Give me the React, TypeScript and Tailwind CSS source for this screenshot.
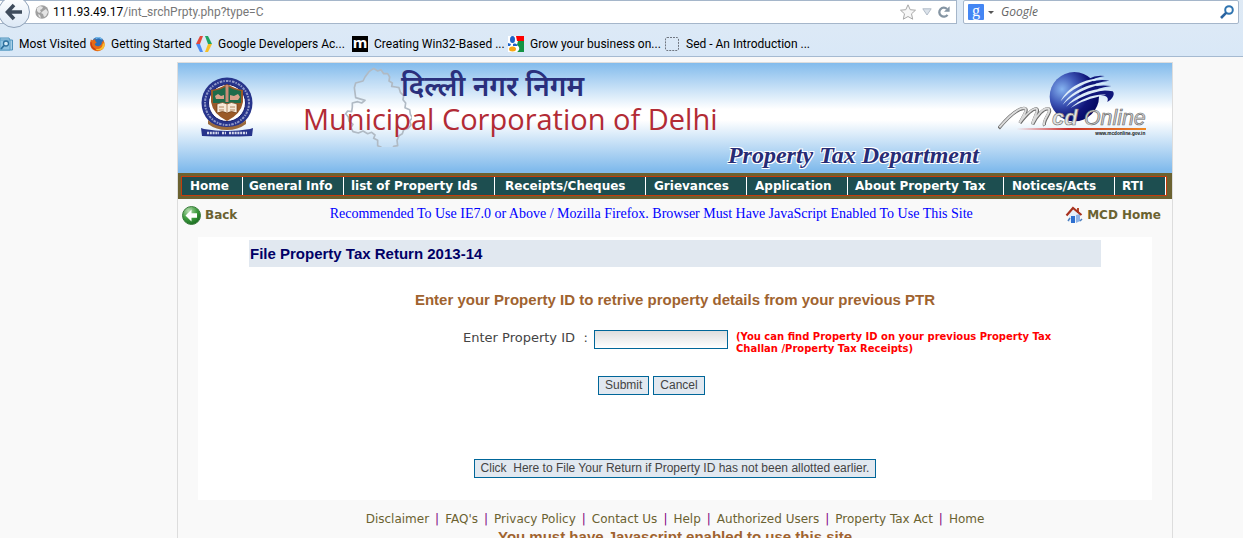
import { useState } from 'react';
import clsx from 'clsx';

const bookmarks = [
  { label: 'Most Visited', icon: <MostVisitedIcon />, width: 'w-[90px]' },
  { label: 'Getting Started', icon: <FirefoxIcon />, width: 'w-[106px]' },
  { label: 'Google Developers Ac...', icon: <DevelopersIcon />, width: 'w-[156px]' },
  { label: 'Creating Win32-Based ...', icon: <MIcon />, width: 'w-[156px]' },
  { label: 'Grow your business on...', icon: <GoogleIcon />, width: 'w-[156px]' },
  { label: 'Sed - An Introduction ...', icon: <BlankIcon />, width: 'w-[156px]' },
];

const menu = [
  { label: 'Home', className: 'w-[61px] pl-2' },
  { label: 'General Info', className: 'w-[101px] pl-1.5' },
  { label: 'list of Property Ids', className: 'w-[151px] pl-[7px]' },
  { label: 'Receipts/Cheques', className: 'w-[151px] pl-2.5' },
  { label: 'Grievances', className: 'w-[101px] pl-2' },
  { label: 'Application', className: 'w-[101px] pl-2' },
  { label: 'About Property Tax', className: 'w-[156px] pl-[7px]' },
  { label: 'Notices/Acts', className: 'w-[111px] pl-2' },
  { label: 'RTI', className: 'w-[51px] pl-[7px]' },
];

const footerLinks = [
  'Disclaimer',
  "FAQ's",
  'Privacy Policy',
  'Contact Us',
  'Help',
  'Authorized Users',
  'Property Tax Act',
  'Home',
];

function MostVisitedIcon() {
  return (
    <svg width="13" height="16" viewBox="0 0 13 16" className="shrink-0">
      <path d="M0 2h9l1 2h2.500v10H0z" fill="#a9d0e8" stroke="#4f93bd" />
      <path d="M0 4h10v10H0z" fill="#8fc3e2" stroke="#5b9dc6" />
      <circle cx="6" cy="7.500" r="2.500" fill="#d5ecf8" stroke="#2c6f9c" strokeWidth="1.300" />
      <path d="M4 9.500L1 13" stroke="#2c6f9c" strokeWidth="1.800" />
    </svg>
  );
}

function FirefoxIcon() {
  return (
    <svg width="15" height="16" viewBox="0 0 16 16" className="shrink-0">
      <circle cx="8.500" cy="7" r="6.500" fill="#2a6fb8" />
      <path d="M6 2c2-1 5-.8 6.500 1" stroke="#7cc1ef" strokeWidth="1.500" fill="none" />
      <path d="M1 3c.5 1 1 1.200 2 1C4 3 5 3 6 3.500 5 4.500 5.500 5.500 7 6c0 1-1.500 1-2 2 .5 2 3 3 5 2 2.500-1 3-3 2.500-5 .5 0 1 .5 1.500 1 0-1 0-2-.5-3C16 6 16.500 10 14 13c-3 3.500-9 3.500-12 0C-.5 10 0 6 1 3z" fill="#e66a14" />
      <path d="M13.500 8c0 4-4 6.500-8 5 3 3 8 2 9.500-1.500.7-2 .7-4 0-6 0 1-.5 2-1.500 2.500z" fill="#fbc02d" />
      <path d="M1 6c0 4 1.500 6.500 5 8" stroke="#c53a12" strokeWidth="1.500" fill="none" />
    </svg>
  );
}

function DevelopersIcon() {
  return (
    <svg width="16" height="16" viewBox="0 0 16 16" className="shrink-0">
      <path d="M4 0h3L4 8H0z" fill="#e2483b" />
      <path d="M0 8h4l3 8H4z" fill="#4b8bf4" />
      <path d="M9 0h3l4 8h-4z" fill="#1fa463" />
      <path d="M12 8h4l-4 8H9z" fill="#f6bf26" />
    </svg>
  );
}

function MIcon() {
  return (
    <span className="flex h-4 w-4 shrink-0 items-center justify-center bg-black pb-[3px] font-['Noto_Sans',sans-serif] text-[15px] leading-none font-bold text-white">
      m
    </span>
  );
}

function GoogleIcon() {
  return (
    <svg width="16" height="16" viewBox="0 0 16 16" className="shrink-0">
      <path d="M0 0h16v16H0z" fill="#fff" />
      <path d="M8 0h8v5H9z" fill="#f00" />
      <path d="M10 5h6v11H9c3-2 3-5 0-7z" fill="#149345" />
      <ellipse cx="4.500" cy="3.500" rx="2.500" ry="3.500" fill="#1d62c7" />
      <path d="M5 8c3-1 4 0 4.500 2H5zM0 7l3 1-1 2H0z" fill="#1d62c7" />
      <ellipse cx="4.500" cy="13" rx="3.500" ry="2.500" fill="#f7a813" />
    </svg>
  );
}

function BlankIcon() {
  return (
    <svg width="16" height="16" viewBox="0 0 16 16" className="shrink-0">
      <rect x="1.500" y="1.500" width="13" height="13" rx="1.500" fill="none" stroke="#707781" strokeDasharray="2 1" />
    </svg>
  );
}

function Browser() {
  return (
    <div className="h-[57px] border-b border-[#a5bad1] bg-linear-to-b from-[#dfeaf5] to-[#d9e8f7] font-[Roboto,'Open_Sans',sans-serif] text-[12px] text-black">
      <div className="flex h-6 gap-1.5 pr-1">
        <div className="relative flex flex-1 items-center border border-l-0 border-[#a5b6ca] bg-white pr-1.5 pl-[35px]">
          <button aria-label="Back" className="absolute -top-[5px] -left-[2px] flex h-8 w-8 items-center justify-center rounded-full border border-[#8fa1b8] bg-linear-to-b from-white to-[#dce8f5]">
            <svg width="18" height="18" viewBox="0 0 18 18">
              <path d="M9 2L2.500 9 9 16M3 9h14" fill="none" stroke="#3f4c5c" strokeWidth="3.600" />
            </svg>
          </button>
          <svg width="14" height="14" viewBox="0 0 14 14" className="mr-1 shrink-0">
            <circle cx="7" cy="7" r="6.700" fill="#a0a0a0" />
            <path d="M2 3l3-2 3 1-1 2-2 1 1 2-2 1-2-2zM8 6l3-2 2 3-2 4-2 1-1-3-2-1zM3 9l2 1 1 3-2-1z" fill="#e4e4e4" />
          </svg>
          <div role="textbox" aria-label="Address" contentEditable suppressContentEditableWarning className="flex-1 whitespace-nowrap text-[#777] outline-none">
            <span className="text-black">111.93.49.17</span>/int_srchPrpty.php?type=C
          </div>
          <svg width="16" height="16" viewBox="0 0 16 16">
            <path d="M8 .8l2.200 4.900 5.300.5-4 3.600 1.200 5.400L8 12.500l-4.700 2.700 1.200-5.400-4-3.600 5.300-.5z" fill="#f7f7f7" stroke="#a8a8a8" />
          </svg>
          <svg width="10" height="8" viewBox="0 0 10 8" className="ml-1.5">
            <path d="M.8.8h8.400L5 7z" fill="#dbe2ea" stroke="#b2bcc8" />
          </svg>
          <svg width="12" height="12" viewBox="0 0 12 12" className="ml-1.5">
            <path d="M9.500 8.800A4.500 4.500 0 1 1 9 3" fill="none" stroke="#8595a3" strokeWidth="2.300" />
            <path d="M6 5.800h5.600V.2z" fill="#8595a3" />
          </svg>
        </div>
        <div className="flex w-[276px] items-center rounded-[2px] border border-[#a5b6ca] bg-white pr-1 pl-1">
          <span className="flex h-4 w-4 items-center justify-center rounded-[1px] bg-[#4486f4] pb-[3px] font-['Liberation_Serif',serif] text-[16px] leading-none text-white">g</span>
          <svg width="6" height="3" viewBox="0 0 6 3" className="mr-[3px] ml-1">
            <path d="M0 0h6L3 3z" fill="#555" />
          </svg>
          <input aria-label="Search" placeholder="Google" className="min-w-0 flex-1 pl-1 font-['Open_Sans',sans-serif] italic outline-none placeholder:text-[#666]" />
          <svg width="14" height="14" viewBox="0 0 14 14">
            <circle cx="9" cy="5" r="3.800" fill="none" stroke="#2f74b0" strokeWidth="2" />
            <path d="M6.300 7.700L1 13" stroke="#2a63a0" strokeWidth="2.600" />
          </svg>
        </div>
      </div>
      <div className="flex h-8 items-center pt-2">
        {bookmarks.map((b) => (
          <a key={b.label} href="#" className={clsx('flex items-center gap-1.5 whitespace-nowrap', b.width)}>
            {b.icon}
            {b.label}
          </a>
        ))}
      </div>
    </div>
  );
}

function Emblem() {
  return (
    <svg width="54" height="61" viewBox="0 0 54 61" className="mt-[13px] shrink-0">
      <circle cx="27" cy="27" r="25.500" fill="#27348b" />
      <circle cx="27" cy="27" r="22" fill="none" stroke="#8f98c8" strokeWidth="2" strokeDasharray="1.500 1.200 2.500 1" />
      <circle cx="27" cy="27" r="18.500" fill="#fff" stroke="#1a2270" />
      <path d="M11 14q8-1 16-6 8 5 16 6v12q-2 12-16 19Q13 38 11 26z" fill="#9a5a28" />
      <path d="M13 15q8-1 14-5 6 4 14 5v12H13z" fill="#1e6b4b" />
      <path d="M25.500 9h3v17h-3z" fill="#c98d77" />
      <path d="M15 20l3-2 3 2 3-1v4h-8zM30 19l4 1 4-2 2 3-2 3h-8z" fill="#d9a28a" />
      <path d="M17 28q6-3 10 0 4-3 10 0v9q-6-3-10 0-4-3-10 0z" fill="#f6ead9" stroke="#6f3d18" strokeWidth=".7" />
      <path d="M27 28v9M19 31h5M30 31h5M19 34h5M30 34h5" stroke="#b58862" />
      <path d="M8 44q7 7 19 7t19-7v4q-8 6-19 6T8 48z" fill="#9a6a3c" />
      <path d="M1 52l3 1q23 4 46 0l3-1-1 8q-25 1-50 0z" fill="#27348b" />
      <path d="M7 57h12M22 57h4M29 57h18" stroke="#d5d8ea" strokeWidth="2.500" strokeDasharray="2 .8" />
    </svg>
  );
}

function DelhiMap() {
  return (
    <svg width="71" height="80" viewBox="516 33 213 240" className="absolute top-1 left-[38px]">
      <path
        d="M560 125l-4-30 4-14 22-6 6-12 12-16 14-10 12 8 10-4 8 12 12 0 6 10-2 12 10 6-2 10 12 2 10 2 4 14 10 10-2 12 8 10-2 14 14 6 2 14 6 10-8 10 4 12-8 10-14 4-4 12-10 6-6 14 2 16-12 2-4 12-14 6-14 0-6-16-10-4 0-16-12-6 4-10-10-8-12 4-14-8-14 6-16-4-6-12 6-10-12-10-2-12-8-10 6-8 12 2 2-14 0-12 16-4 12 4 10-8z"
        fill="#fff"
        fillOpacity=".15"
        stroke="#b0bac4"
        strokeWidth="5"
        strokeLinejoin="round"
      />
    </svg>
  );
}

function McdOnlineLogo() {
  return (
    <svg width="150" height="66" viewBox="18 15 450 198" className="mt-2 shrink-0">
      <defs>
        <radialGradient id="globe" cx=".25" cy=".35" r=".75">
          <stop offset="0" stopColor="#86b4f0" />
          <stop offset=".4" stopColor="#3f58b8" />
          <stop offset=".75" stopColor="#10157a" />
          <stop offset="1" stopColor="#060a66" />
        </radialGradient>
        <linearGradient id="rule">
          <stop offset="0" stopColor="#d22" stopOpacity="0" />
          <stop offset=".4" stopColor="#c9302c" />
          <stop offset="1" stopColor="#f08a24" />
        </linearGradient>
      </defs>
      <circle cx="247" cy="92" r="74" fill="url(#globe)" />
      <path d="M290 38q22-12 48-8-30 4-50 20zM270 62q36-26 82-18-40 2-78 30zM260 80q44-28 98-20-44 4-90 32zM256 98q50-32 106-22c8 8 0 24-16 32 6-16-6-20-22-18-26 2-44 8-60 20z" fill="#10167a" />
      <path d="M206 106c20-42 70-70 132-70-56 10-106 36-132 70zM212 116c24-40 78-68 140-66-58 10-112 34-140 66zM222 122c26-34 78-60 138-54-56 8-108 28-138 54zM236 126c28-26 66-42 106-40-44 10-80 22-106 40z" fill="#dcebf8" />
      <path d="M20 187C52 148 80 128 96 127c14 0 2 18-12 44 22-28 38-44 50-42 8 4-8 26-12 46 14-28 34-50 48-46 12 8-20 36-12 50" fill="none" stroke="#6b6b6b" strokeWidth="10" />
      <path d="M22 184C54 147 80 127 95 126c14 0 2 18-12 44 22-28 38-44 50-42 8 4-8 26-12 46 14-28 34-50 48-46 12 8-20 36-12 50" fill="none" stroke="#dadada" strokeWidth="6" />
      <text x="180" y="178" fontFamily="Liberation Sans" fontSize="66" fontStyle="italic" fontWeight="bold" fill="#e2e2e2" stroke="#777" strokeWidth="2">cd</text>
      <text x="276" y="178" fontFamily="Liberation Sans" fontSize="64" fontStyle="italic" fill="#d4d4d4" stroke="#6b6b6b" strokeWidth="2">Online</text>
      <path d="M74 186h388v6H74z" fill="url(#rule)" />
      <text x="310" y="206" fontFamily="Liberation Sans" fontSize="14" fontWeight="bold" fill="#111">www.mcdonline.gov.in</text>
    </svg>
  );
}

function Banner() {
  return (
    <header className="flex h-[110px] bg-[linear-gradient(#82bbec,#ffffff_42%,#ffffff_52%,#82bbec_97%)] pr-6 pl-[22px]">
      <Emblem />
      <div className="relative ml-[49px] flex flex-1 flex-col">
        <DelhiMap />
        <div lang="hi" className="relative pt-2.5 pl-[98px] font-['Noto_Sans_Devanagari','Noto_Sans',sans-serif] text-[28px] leading-8 font-semibold whitespace-nowrap text-[#2a2f7c]">
          दिल्ली नगर निगम
        </div>
        <h1 className="relative font-['Open_Sans',sans-serif] text-[29px] leading-7 whitespace-nowrap text-[#b22b35]">
          Municipal Corporation of Delhi
        </h1>
        <p className="mt-1.5 self-end font-['Liberation_Serif',serif] text-[24px] leading-8 font-bold whitespace-nowrap text-[#272c75] italic [text-shadow:1px_1px_0_#fff,-1px_-1px_0_#fff,1px_-1px_0_#fff,-1px_1px_0_#fff]">
          Property Tax Department
        </p>
      </div>
      <div className="w-[19px]" />
      <McdOnlineLogo />
    </header>
  );
}

function BackIcon() {
  return (
    <svg width="19" height="19" viewBox="0 0 19 19">
      <defs>
        <radialGradient id="green" cx=".35" cy=".25" r=".9">
          <stop offset="0" stopColor="#b6dcb0" />
          <stop offset=".5" stopColor="#3d9b3d" />
          <stop offset="1" stopColor="#0b5a17" />
        </radialGradient>
      </defs>
      <circle cx="9.500" cy="9.500" r="9" fill="url(#green)" stroke="#3b7d3d" />
      <path d="M3.500 9.500l6-6v3.700h5.500v4.600H9.500v3.700z" fill="#fff" />
    </svg>
  );
}

function HomeIcon() {
  return (
    <svg width="18" height="18" viewBox="0 0 18 18">
      <path d="M4 8l5-5 6 5v8H4z" fill="#e6effa" />
      <path d="M11 9l4-1v7l-4 2z" fill="#8fb3e6" />
      <path d="M6 10h4v7H6z" fill="#2d6fd0" />
      <path d="M12 2h2v5h-2z" fill="#b54a2b" />
      <path d="M1.500 9.500L8 2l8.500 7" fill="none" stroke="#a8321f" strokeWidth="2.200" />
      <path d="M3 15l2-3M15 15l2-2" stroke="#4d80c0" strokeWidth="1.500" />
    </svg>
  );
}

function Menu() {
  return (
    <nav className="border-[3px] border-r-[5px] border-[#6b6231] bg-[#6b6231] font-['DejaVu_Sans',sans-serif] text-[12px] font-bold text-white">
      <ul className="flex h-5 border border-[#c43c0c] bg-[#1d4e50]">
        {menu.map((item) => (
          <li key={item.label} className={clsx('border-r border-white leading-[18px] whitespace-nowrap', item.className)}>
            <a href="#">{item.label}</a>
          </li>
        ))}
      </ul>
    </nav>
  );
}

const buttonClass =
  'h-[19px] border border-[#006699] bg-[#e1e8f0] px-1.5 font-[\'Liberation_Sans\',sans-serif] text-[12px] leading-[17px] whitespace-pre text-[#444]';

export default function App() {
  const [propertyId, setPropertyId] = useState('');

  return (
    <div className="h-screen overflow-hidden bg-[#f9f9f9] font-['DejaVu_Sans',sans-serif] text-[12px] text-[#444]">
      <Browser />
      <div className="mt-[5px] mr-[70px] ml-[177px] border border-[#dddddd]">
        <Banner />
        <Menu />

        <div className="flex h-[38px] justify-between pr-[11px] pl-1 font-bold text-[#6b6231]">
          <a href="#" className="flex h-8 items-center gap-1">
            <BackIcon />
            Back
          </a>
          <p className="pt-1 font-['Liberation_Serif',serif] text-[14px] font-normal text-[#0000ff]">
            Recommended To Use IE7.0 or Above / Mozilla Firefox. Browser Must Have JavaScript Enabled To Use This Site
          </p>
          <a href="#" className="flex h-8 items-center gap-1">
            <HomeIcon />
            MCD Home
          </a>
        </div>

        <main className="mx-5 flex h-[263px] flex-col bg-white pt-[3px]">
          <h2 className="mx-[51px] bg-[#e1e8f0] pl-px font-['Liberation_Sans',sans-serif] text-[15px] leading-[27px] font-bold text-[#000066]">
            File Property Tax Return 2013-14
          </h2>
          <p className="mt-6 text-center font-['Liberation_Sans',sans-serif] text-[15px] leading-[18px] font-bold text-[#a0632f]">
            Enter your Property ID to retrive property details from your previous PTR
          </p>
          <form className="flex flex-1 flex-col" onSubmit={(e) => e.preventDefault()}>
            <div className="mt-[21px] flex pl-[265px]">
              <label htmlFor="property-id" className="flex w-[131px] justify-between pr-1.5 text-[13px] leading-4">
                <span>Enter Property ID</span>
                <span>:</span>
              </label>
              <input
                id="property-id"
                value={propertyId}
                onChange={(e) => setPropertyId(e.target.value)}
                className="h-[19px] w-[134px] border border-[#006699] bg-linear-to-b from-[#dddddd] to-white px-1 outline-none"
              />
              <p className="mt-px ml-2 w-[340px] text-[10px] leading-3 font-bold text-[#ff0000]">
                (You can find Property ID on your previous Property Tax Challan /Property Tax Receipts)
              </p>
            </div>
            <div className="mt-[21px] flex gap-1 pl-[400px]">
              <button type="submit" className={buttonClass}>Submit</button>
              <button type="button" className={buttonClass} onClick={() => setPropertyId('')}>Cancel</button>
            </div>
            <button type="button" className={clsx(buttonClass, 'mt-16 self-center')}>
              {'Click  Here to File Your Return if Property ID has not been allotted earlier.'}
            </button>
          </form>
        </main>

        <footer className="pt-2.5 text-center text-[#6b6231]">
          <ul className="flex justify-center leading-[18px]">
            {footerLinks.map((link, idx) => (
              <li key={link} className="whitespace-nowrap">
                {idx > 0 && <span className="px-1.5 text-[#800080]">|</span>}
                <a href="#">{link}</a>
              </li>
            ))}
          </ul>
          <p className="font-['Liberation_Sans',sans-serif] text-[15px] leading-[18px] font-bold text-[#a0632f]">
            You must have Javascript enabled to use this site
          </p>
        </footer>
      </div>
    </div>
  );
}
